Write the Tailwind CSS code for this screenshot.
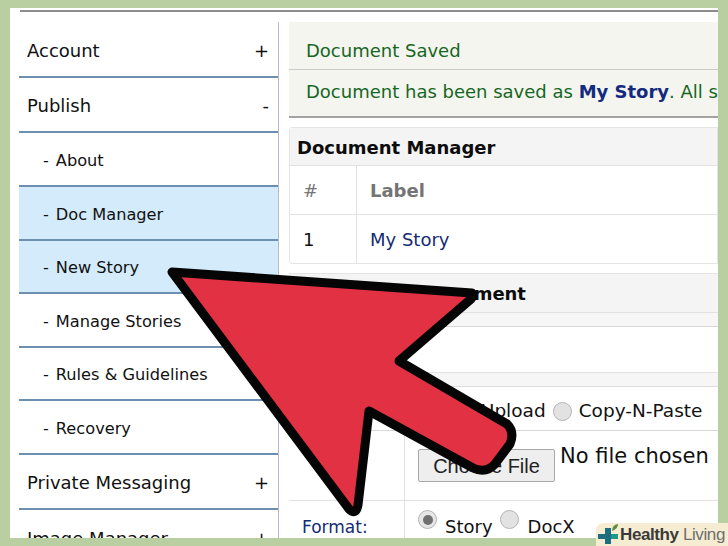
<!DOCTYPE html>
<html>
<head>
<script src="https://cdn.jsdelivr.net/npm/@tailwindcss/browser@4"></script>
</head>
<body class="m-0">
<div class="relative w-[728px] h-[546px] overflow-hidden bg-[#b9cfa1] font-['DejaVu_Sans',sans-serif] text-[#111]">
  <div class="ml-[10px] w-[708px] h-[530px] translate-y-[8px] bg-white overflow-hidden">
    <div class="ml-[10px] h-[4px] border-b-2 border-[#8e8c8e]"></div>
    <div class="flex pl-[9px]">
      <nav class="w-[260px] shrink-0 border-r border-[#b5bcc4] mt-[10px] pt-[2px] text-[#111]">
        <div class="h-[54px] flex items-center justify-between pl-[8px] pr-[9px] pt-[1px] text-[18px] border-b-2 border-[#6c8fb2]"><span>Account</span><span>+</span></div>
        <div class="h-[55px] flex items-center justify-between pl-[8px] pr-[9px] pt-[2px] text-[18px] border-b-2 border-[#6c8fb2]"><span>Publish</span><span>-</span></div>
        <div class="h-[54px] flex items-center gap-[7px] pl-[24px] pt-[4px] text-[16.2px] border-b-2 border-[#6c8fb2]"><span>-</span><span>About</span></div>
        <div class="h-[54px] flex items-center gap-[7px] pl-[24px] pt-[4px] text-[16.2px] border-b-2 border-[#6c8fb2] bg-[#d3ebfb]"><span>-</span><span>Doc Manager</span></div>
        <div class="h-[53px] flex items-center gap-[7px] pl-[24px] pt-[4px] text-[16.2px] border-b-2 border-[#6c8fb2] bg-[#d3ebfb]"><span>-</span><span>New Story</span></div>
        <div class="h-[54px] flex items-center gap-[7px] pl-[24px] pt-[4px] text-[16.2px] border-b-2 border-[#6c8fb2]"><span>-</span><span>Manage Stories</span></div>
        <div class="h-[53px] flex items-center gap-[7px] pl-[24px] pt-[4px] text-[16.2px] border-b-2 border-[#6c8fb2]"><span>-</span><span>Rules &amp; Guidelines</span></div>
        <div class="h-[54px] flex items-center gap-[7px] pl-[24px] pt-[4px] text-[16.2px] border-b-2 border-[#6c8fb2]"><span>-</span><span>Recovery</span></div>
        <div class="h-[55px] flex items-center justify-between pl-[8px] pr-[9px] pt-[2px] text-[18px] border-b-2 border-[#6c8fb2]"><span>Private Messaging</span><span>+</span></div>
        <div class="h-[55px] flex items-center justify-between pl-[8px] pr-[9px] pt-[2px] text-[18px]"><span>Image Manager</span><span>+</span></div>
      </nav>
      <main class="ml-[10px] w-[429px] shrink-0 mt-[10px] overflow-hidden">
        <div class="bg-[#f4f5ef] border-b-2 border-[#a3a3a3] text-[#17661f] text-[18px] whitespace-nowrap">
          <div class="h-[48px] flex items-center pl-[17px] pt-[10px] border-b border-[#c9c9c5]">Document Saved</div>
          <div class="h-[46px] flex items-center pl-[17px] pb-[4px]"><span>Document has been saved as <b class="text-[#142a80]">My Story</b>. All stories are private.</span></div>
        </div>
        <div class="mt-[9px] border border-[#e4e4e4] rounded-l-[3px]">
          <div class="h-[38px] flex items-center pl-[7px] pt-[1px] bg-[#f4f4f4] border-b border-[#e2e2e2] font-bold text-[18px] text-[#0c0c0c]">Document Manager</div>
          <div class="h-[49px] flex items-center border-b border-[#e2e2e2] text-[18px]">
            <div class="w-[67px] h-full flex items-center pl-[13px] border-r border-[#e2e2e2] text-[#777] ">#</div>
            <div class="pl-[13px] font-bold text-[#747474]">Label</div>
          </div>
          <div class="h-[48px] flex items-center text-[18px]">
            <div class="w-[67px] h-full flex items-center pl-[13px] border-r border-[#e2e2e2]">1</div>
            <div class="pl-[13px] text-[#142a75]">My Story</div>
          </div>
        </div>
        <div class="mt-[9px] border-t border-[#e4e4e4]">
          <div class="h-[39px] flex items-center pl-[8px] bg-[#f4f4f4] border-b border-[#e2e2e2] font-bold text-[18px] tracking-[-0.1px] text-[#0c0c0c]">Upload New Document</div>
          <div class="h-[14px] bg-[#f6f6f6] border-b border-[#d8d8d8]"></div>
          <div class="h-[46px] ml-[116px] border-l border-[#e2e2e2] border-b"></div>
          <div class="h-[14px] bg-[#f6f6f6] border-b border-[#dcdcdc]"></div>
          <div class="flex h-[44px] border-b border-[#d8d8d8]">
            <div class="w-[116px] border-r border-[#e2e2e2]"></div>
            <div class="flex items-center pl-[13px] text-[18.5px] whitespace-nowrap pt-[5px]">
              <span class="w-[20px] h-[20px] rounded-full border border-[#b4b4b4] bg-[#e6e6e6]"></span><span class="ml-[6px]">File Upload</span>
              <span class="ml-[7px] w-[19px] h-[19px] rounded-full border border-[#b4b4b4] bg-[#e2e2e2]"></span>
              <span class="ml-[7px]">Copy-N-Paste</span>
            </div>
          </div>
          <div class="flex h-[70px] border-b border-[#e2e2e2]">
            <div class="w-[116px] border-r border-[#e2e2e2]"></div>
            <div class="flex items-start pl-[13px] pt-[10px] whitespace-nowrap">
              <button class="w-[137px] h-[33px] mt-[8px] border border-[#a8a8a8] rounded-[2px] bg-[#eeeeee] font-['Liberation_Sans',sans-serif] text-[20px] text-[#222]">Choose File</button>
              <span class="ml-[5px] text-[21px]">No file chosen</span>
            </div>
          </div>
          <div class="flex h-[46px]">
            <div class="w-[116px] border-r border-[#e2e2e2] pl-[13px] pt-[14px] text-[17px] text-[#142a75]">Format:</div>
            <div class="flex items-start pl-[13px] pt-[9px] text-[18px] whitespace-nowrap">
              <span class="w-[19px] h-[19px] rounded-full border border-[#b4b4b4] bg-[#e6e6e6] flex items-center justify-center"><span class="w-[10px] h-[10px] rounded-full bg-[#707070]"></span></span>
              <span class="ml-[8px] mt-[3px]">Story</span>
              <span class="ml-[7px] w-[19px] h-[19px] rounded-full border border-[#b4b4b4] bg-[#e2e2e2]"></span>
              <span class="ml-[9px] mt-[3px]">DocX</span>
            </div>
          </div>
        </div>
      </main>
    </div>
  </div>
  <svg class="absolute left-0 top-0" width="728" height="546" viewBox="0 0 728 546">
    <path d="M172 272 L472 293 Q474 296 471 299 L399 361 L507 424 Q515 432 510 444 L495 464 Q486 474 473 468 L369 411 L358 505 Q356 516 349 509 Z" fill="#e23142" stroke="#050505" stroke-width="9" stroke-linejoin="round"/>
  </svg>
  <div class="absolute left-[596px] top-[523px] w-[132px] h-[23px] bg-[#f6ecd2] rounded-tl-[8px] flex items-center pl-[2px]">
    <svg width="23" height="23" viewBox="0 0 23 23">
      <path d="M0 11 H7 V5 H13 V11 H20 V16 H13 V21 H7 V16 H0 Z" fill="#1d6f80"/>
      <path d="M13 11 H20 V16 H13 Z" fill="#1f9a8a"/>
      <path d="M14 8 Q14 2 20 1 Q20 6 14 8 Z" fill="#5b8f3a"/>
    </svg>
    <span class="ml-[-1px] font-['Liberation_Sans',sans-serif] text-[17px] text-[#6e6e6e] whitespace-nowrap tracking-[-0.4px]"><b class="text-[#3a3a3a]">Healthy</b> Living</span>
  </div>
</div>
</body>
</html>
